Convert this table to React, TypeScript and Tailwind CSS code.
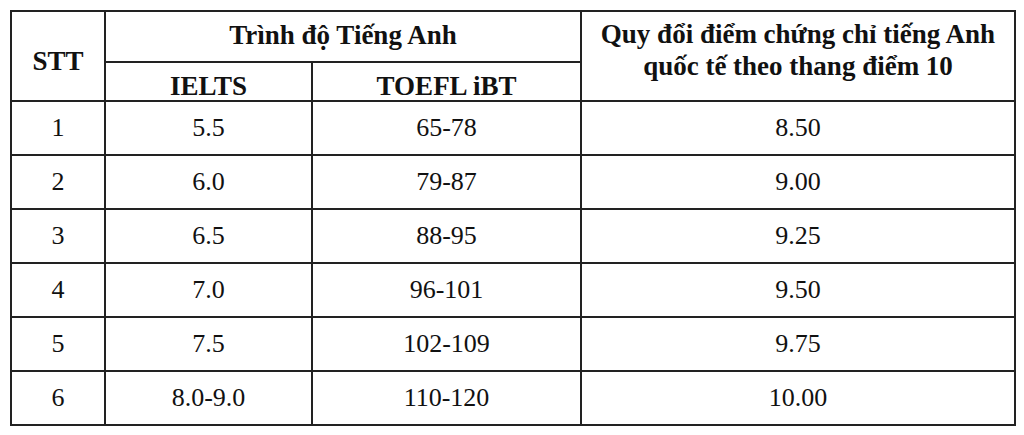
import React from 'react';

const rows = [
  { stt: '1', ielts: '5.5', toefl: '65-78', score: '8.50' },
  { stt: '2', ielts: '6.0', toefl: '79-87', score: '9.00' },
  { stt: '3', ielts: '6.5', toefl: '88-95', score: '9.25' },
  { stt: '4', ielts: '7.0', toefl: '96-101', score: '9.50' },
  { stt: '5', ielts: '7.5', toefl: '102-109', score: '9.75' },
  { stt: '6', ielts: '8.0-9.0', toefl: '110-120', score: '10.00' }
];

const cell = 'border-2 border-[#222] text-center align-middle p-0';

export default function App() {
  return (
    <div
      className="w-[1024px] h-[435px] bg-white pt-[10px] pl-[10px] text-[#111]"
      style={{ fontFamily: '"Liberation Serif", "Times New Roman", serif' }}
    >
      <table className="border-collapse table-fixed w-[1006px] text-[26px] leading-[32px]">
        <colgroup>
          <col className="w-[94px]" />
          <col className="w-[207px]" />
          <col className="w-[269px]" />
          <col className="w-[434px]" />
        </colgroup>
        <thead className="font-bold text-[27px]">
          <tr className="h-[51px]">
            <th rowSpan={2} className={`${cell} pt-[10px]`}>
              STT
            </th>
            <th colSpan={2} className={`${cell} pb-[4px]`}>
              Trình độ Tiếng Anh
            </th>
            <th rowSpan={2} className={`${cell} pb-[12px]`}>
              Quy đổi điểm chứng chỉ tiếng Anh
              <br />
              quốc tế theo thang điểm 10
            </th>
          </tr>
          <tr className="h-[39px]">
            <th className={`${cell} pt-[8px] leading-[26px]`}>IELTS</th>
            <th className={`${cell} pt-[8px] leading-[26px]`}>TOEFL iBT</th>
          </tr>
        </thead>
        <tbody>
          {rows.map((r) => (
            <tr key={r.stt} className="h-[54px]">
              <td className={cell}>{r.stt}</td>
              <td className={cell}>{r.ielts}</td>
              <td className={cell}>{r.toefl}</td>
              <td className={cell}>{r.score}</td>
            </tr>
          ))}
        </tbody>
      </table>
    </div>
  );
}
